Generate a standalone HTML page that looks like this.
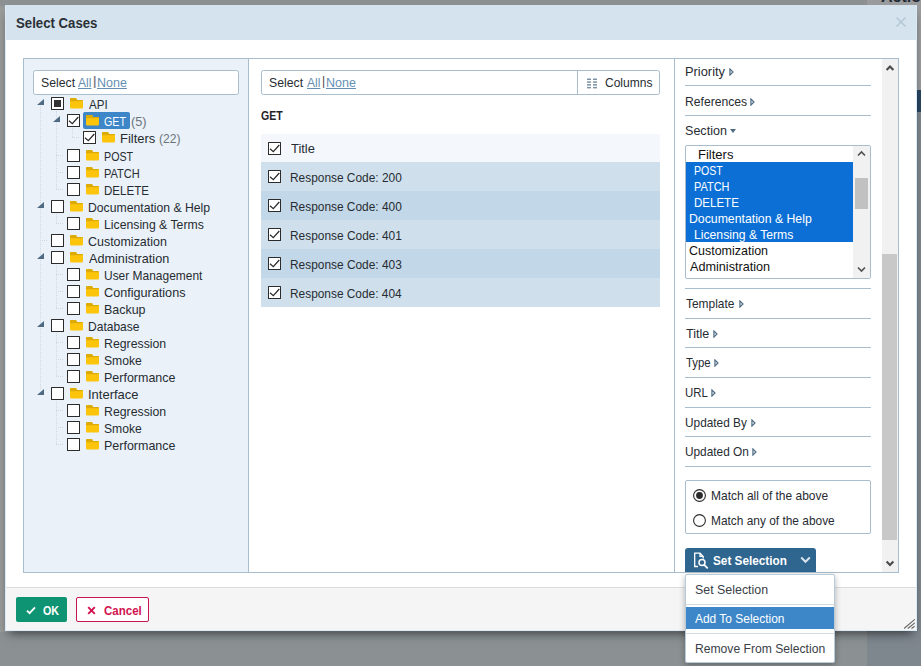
<!DOCTYPE html>
<html><head><meta charset="utf-8"><title>Select Cases</title>
<style>
*{box-sizing:border-box;margin:0;padding:0}
html,body{width:921px;height:666px;overflow:hidden}
body{background:#9a9b9b;font-family:"Liberation Sans",sans-serif;font-size:13.5px;color:#272c32;position:relative}
.abs{position:absolute}
.t{display:inline-block;white-space:nowrap;vertical-align:top;overflow:visible}
.t>span{display:inline-block;transform-origin:0 50%;white-space:nowrap}
a{color:#648fb3}
a .t>span{text-decoration:underline;text-underline-offset:1px}
#dlg{position:absolute;left:5px;top:5px;width:912px;height:626px;background:#fff;box-shadow:0 6px 10px -4px rgba(0,0,0,.62)}
#tb{position:absolute;left:0;top:0;width:912px;height:35px;background:#d4e3ee}
#ft{position:absolute;left:0;top:582px;width:912px;height:44px;background:#f5f5f5;border-top:1px solid #dcdcdc}
.cb{position:absolute;width:13px;height:13px;border:1px solid #2b2b2b;background:#fff;border-radius:.5px}
.cb svg{position:absolute;left:0;top:0}
.row{position:absolute;left:0;height:17px;line-height:17px;white-space:nowrap}
.fold{position:absolute;width:13px;height:11px}
.tri{position:absolute;width:0;height:0;border-left:7px solid transparent;border-bottom:6.5px solid #4e6a82}
.frow{position:absolute;left:685px;width:186px;border-bottom:1px solid #a9bdcc}
.cnt{color:#6b747c}
</style></head><body>

<div class="abs" style="left:0;top:0;width:921px;height:6px;background:#8e9192"></div>
<div class="abs" style="left:0;top:6px;width:6px;height:626px;background:#999a9a"></div>
<div class="abs" style="left:0;top:632px;width:921px;height:34px;background:#8b9193"></div>
<div class="abs" style="left:867px;top:0;width:54px;height:90px;background:#9a9c9d"></div>
<div class="abs" style="left:867px;top:90px;width:54px;height:22px;background:#2a4560"></div>
<div class="abs" style="left:867px;top:112px;width:54px;height:554px;background:#7e868e"></div>
<div class="abs" style="left:881px;top:-11px;font-size:16px;line-height:16px;font-weight:bold;color:#1f2a35;white-space:nowrap">Actions</div>
<div id="dlg"><div id="tb"></div><div id="ft"></div><div class="abs" style="left:0;top:0;width:912px;height:626px;border:1px solid #d9ebf6;border-top:0"></div></div>
<div class="abs" style="left:16px;top:15px;line-height:17px;font-size:14.5px;font-weight:bold;color:#2a3036"><span class="t" style="width:81.42px;margin-left:-0.38px;font-size:14.5px;font-weight:bold;"><span style="transform:scaleX(0.9100)">Select Cases</span></span></div>
<svg class="abs" style="left:895px;top:16px" width="12" height="12" viewBox="0 0 12 12"><path d="M1.5 1.5 L10.5 10.5 M10.5 1.5 L1.5 10.5" stroke="#b4c7d6" stroke-width="1.4" fill="none"/></svg>
<div class="abs" style="left:23px;top:58px;width:876px;height:515px;border:1px solid #a9bdcc;background:#fff"></div>
<div class="abs" style="left:24px;top:59px;width:224px;height:513px;background:#eaf1f8"></div>
<div class="abs" style="left:248px;top:59px;width:1px;height:513px;background:#a9bdcc"></div>
<div class="abs" style="left:674px;top:59px;width:1px;height:513px;background:#a9bdcc"></div>
<div class="abs" style="left:33px;top:70px;width:206px;height:25px;border:1px solid #a9bdcc;border-radius:2.5px;background:#fff"></div>
<div class="abs" style="left:41.2px;top:74px;line-height:17px"><span class="t" style="width:34.05px;margin-left:-0.56px;"><span style="transform:scaleX(0.9074)">Select</span></span></div>
<a class="abs" style="left:78.3px;top:74px;line-height:17px"><span class="t" style="width:13.43px;margin-left:-0.02px;"><span style="transform:scaleX(0.8953)">All</span></span></a>
<div class="abs" style="left:93.0px;top:74.9px;font-size:12px;line-height:12px;color:#7f8388;font-weight:bold;">|</div>
<a class="abs" style="left:98.4px;top:74px;line-height:17px"><span class="t" style="width:29.88px;margin-left:-1.03px;"><span style="transform:scaleX(0.9259)">None</span></span></a>
<div class="abs" style="left:261px;top:70px;width:399px;height:25px;border:1px solid #a9bdcc;border-radius:2.5px;background:#fff"></div>
<div class="abs" style="left:269.6px;top:74px;line-height:17px"><span class="t" style="width:34.05px;margin-left:-0.56px;"><span style="transform:scaleX(0.9074)">Select</span></span></div>
<a class="abs" style="left:306.6px;top:74px;line-height:17px"><span class="t" style="width:13.43px;margin-left:-0.02px;"><span style="transform:scaleX(0.8953)">All</span></span></a>
<div class="abs" style="left:321.9px;top:74.9px;font-size:12px;line-height:12px;color:#4a4448;">|</div>
<a class="abs" style="left:327.5px;top:74px;line-height:17px"><span class="t" style="width:29.88px;margin-left:-1.03px;"><span style="transform:scaleX(0.9259)">None</span></span></a>
<div class="abs" style="left:40px;top:106px;width:0;height:283px;border-left:1px dotted #cfd9e4"></div>
<div class="abs" style="left:56px;top:111px;width:0;height:78px;border-left:1px dotted #cfd9e4"></div>
<div class="abs" style="left:56px;top:155px;width:7px;height:0;border-top:1px dotted #cfd9e4"></div>
<div class="abs" style="left:56px;top:172px;width:7px;height:0;border-top:1px dotted #cfd9e4"></div>
<div class="abs" style="left:56px;top:189px;width:7px;height:0;border-top:1px dotted #cfd9e4"></div>
<div class="abs" style="left:56px;top:214px;width:0;height:9px;border-left:1px dotted #cfd9e4"></div>
<div class="abs" style="left:56px;top:223px;width:7px;height:0;border-top:1px dotted #cfd9e4"></div>
<div class="abs" style="left:40px;top:240px;width:7px;height:0;border-top:1px dotted #cfd9e4"></div>
<div class="abs" style="left:56px;top:265px;width:0;height:43px;border-left:1px dotted #cfd9e4"></div>
<div class="abs" style="left:56px;top:274px;width:7px;height:0;border-top:1px dotted #cfd9e4"></div>
<div class="abs" style="left:56px;top:291px;width:7px;height:0;border-top:1px dotted #cfd9e4"></div>
<div class="abs" style="left:56px;top:308px;width:7px;height:0;border-top:1px dotted #cfd9e4"></div>
<div class="abs" style="left:56px;top:333px;width:0;height:43px;border-left:1px dotted #cfd9e4"></div>
<div class="abs" style="left:56px;top:342px;width:7px;height:0;border-top:1px dotted #cfd9e4"></div>
<div class="abs" style="left:56px;top:359px;width:7px;height:0;border-top:1px dotted #cfd9e4"></div>
<div class="abs" style="left:56px;top:376px;width:7px;height:0;border-top:1px dotted #cfd9e4"></div>
<div class="abs" style="left:56px;top:401px;width:0;height:43px;border-left:1px dotted #cfd9e4"></div>
<div class="abs" style="left:56px;top:410px;width:7px;height:0;border-top:1px dotted #cfd9e4"></div>
<div class="abs" style="left:56px;top:427px;width:7px;height:0;border-top:1px dotted #cfd9e4"></div>
<div class="abs" style="left:56px;top:444px;width:7px;height:0;border-top:1px dotted #cfd9e4"></div>
<div class="abs" style="left:72px;top:128px;width:0;height:9px;border-left:1px dotted #cfd9e4"></div>
<div class="abs" style="left:72px;top:137px;width:7px;height:0;border-top:1px dotted #cfd9e4"></div>
<div class="tri" style="left:37px;top:99px"></div>
<div class="cb" style="left:51px;top:97px"><div style="position:absolute;left:2px;top:2px;width:7px;height:7px;background:#333"></div></div>
<svg class="fold" style="left:69.7px;top:98px;height:10.5px" viewBox="0 0 13 10.5"><path d="M0 1.2 Q0 0 1.2 0 H5.4 Q6.2 0 6.6 .9 L7 2 H11.8 Q13 2 13 3.2 V9.3 Q13 10.5 11.8 10.5 H1.2 Q0 10.5 0 9.3 Z" fill="#fcc50c"/><path d="M0 1.2 Q0 0 1.2 0 H5.4 Q6.2 0 6.6 .9 L7 2 H11.8 Q13 2 13 3.2 H0 Z" fill="#ddab05"/></svg>
<div class="abs" style="left:88.7px;top:96px;line-height:17px;"><span class="t" style="width:18.59px;margin-left:-0.02px;"><span style="transform:scaleX(0.8542)">API</span></span></div>
<div class="tri" style="left:53px;top:116px"></div>
<div class="abs" style="left:83px;top:112px;width:47px;height:17px;background:#3d87c9;border-radius:2px"></div>
<div class="cb" style="left:67px;top:114px"><svg width="11" height="11" viewBox="0 0 11 11"><path d="M1 5.7 L4.3 8.7 L10.3 2" stroke="#2b2b2b" stroke-width="1.25" fill="none"/></svg></div>
<svg class="fold" style="left:85.7px;top:115px;height:10.5px" viewBox="0 0 13 10.5"><path d="M0 1.2 Q0 0 1.2 0 H5.4 Q6.2 0 6.6 .9 L7 2 H11.8 Q13 2 13 3.2 V9.3 Q13 10.5 11.8 10.5 H1.2 Q0 10.5 0 9.3 Z" fill="#fcc50c"/><path d="M0 1.2 Q0 0 1.2 0 H5.4 Q6.2 0 6.6 .9 L7 2 H11.8 Q13 2 13 3.2 H0 Z" fill="#ddab05"/></svg>
<div class="abs" style="left:104.6px;top:113px;line-height:17px;color:#fff;"><span class="t" style="width:21.98px;margin-left:-0.54px;"><span style="transform:scaleX(0.7921)">GET</span></span></div>
<div class="abs cnt" style="left:131.6px;top:113px;line-height:17px"><span class="t" style="width:15.58px;margin-left:-0.79px;"><span style="transform:scaleX(0.9444)">(5)</span></span></div>
<div class="cb" style="left:83px;top:131px"><svg width="11" height="11" viewBox="0 0 11 11"><path d="M1 5.7 L4.3 8.7 L10.3 2" stroke="#2b2b2b" stroke-width="1.25" fill="none"/></svg></div>
<svg class="fold" style="left:101.7px;top:132px;height:10.5px" viewBox="0 0 13 10.5"><path d="M0 1.2 Q0 0 1.2 0 H5.4 Q6.2 0 6.6 .9 L7 2 H11.8 Q13 2 13 3.2 V9.3 Q13 10.5 11.8 10.5 H1.2 Q0 10.5 0 9.3 Z" fill="#fcc50c"/><path d="M0 1.2 Q0 0 1.2 0 H5.4 Q6.2 0 6.6 .9 L7 2 H11.8 Q13 2 13 3.2 H0 Z" fill="#ddab05"/></svg>
<div class="abs" style="left:121.1px;top:130px;line-height:17px;"><span class="t" style="width:35.23px;margin-left:-1.06px;"><span style="transform:scaleX(0.9586)">Filters</span></span></div>
<div class="abs cnt" style="left:159.8px;top:130px;line-height:17px"><span class="t" style="width:21.50px;margin-left:-0.75px;"><span style="transform:scaleX(0.8955)">(22)</span></span></div>
<div class="cb" style="left:67px;top:149px"></div>
<svg class="fold" style="left:85.7px;top:150px;height:10.5px" viewBox="0 0 13 10.5"><path d="M0 1.2 Q0 0 1.2 0 H5.4 Q6.2 0 6.6 .9 L7 2 H11.8 Q13 2 13 3.2 V9.3 Q13 10.5 11.8 10.5 H1.2 Q0 10.5 0 9.3 Z" fill="#fcc50c"/><path d="M0 1.2 Q0 0 1.2 0 H5.4 Q6.2 0 6.6 .9 L7 2 H11.8 Q13 2 13 3.2 H0 Z" fill="#ddab05"/></svg>
<div class="abs" style="left:104.6px;top:148px;line-height:17px;"><span class="t" style="width:29.12px;margin-left:-0.88px;"><span style="transform:scaleX(0.7923)">POST</span></span></div>
<div class="cb" style="left:67px;top:166px"></div>
<svg class="fold" style="left:85.7px;top:167px;height:10.5px" viewBox="0 0 13 10.5"><path d="M0 1.2 Q0 0 1.2 0 H5.4 Q6.2 0 6.6 .9 L7 2 H11.8 Q13 2 13 3.2 V9.3 Q13 10.5 11.8 10.5 H1.2 Q0 10.5 0 9.3 Z" fill="#fcc50c"/><path d="M0 1.2 Q0 0 1.2 0 H5.4 Q6.2 0 6.6 .9 L7 2 H11.8 Q13 2 13 3.2 H0 Z" fill="#ddab05"/></svg>
<div class="abs" style="left:104.6px;top:165px;line-height:17px;"><span class="t" style="width:37.30px;margin-left:-0.90px;"><span style="transform:scaleX(0.8152)">PATCH</span></span></div>
<div class="cb" style="left:67px;top:183px"></div>
<svg class="fold" style="left:85.7px;top:184px;height:10.5px" viewBox="0 0 13 10.5"><path d="M0 1.2 Q0 0 1.2 0 H5.4 Q6.2 0 6.6 .9 L7 2 H11.8 Q13 2 13 3.2 V9.3 Q13 10.5 11.8 10.5 H1.2 Q0 10.5 0 9.3 Z" fill="#fcc50c"/><path d="M0 1.2 Q0 0 1.2 0 H5.4 Q6.2 0 6.6 .9 L7 2 H11.8 Q13 2 13 3.2 H0 Z" fill="#ddab05"/></svg>
<div class="abs" style="left:104.6px;top:182px;line-height:17px;"><span class="t" style="width:44.94px;margin-left:-0.95px;"><span style="transform:scaleX(0.8558)">DELETE</span></span></div>
<div class="tri" style="left:37px;top:202px"></div>
<div class="cb" style="left:51px;top:200px"></div>
<svg class="fold" style="left:69.7px;top:201px;height:10.5px" viewBox="0 0 13 10.5"><path d="M0 1.2 Q0 0 1.2 0 H5.4 Q6.2 0 6.6 .9 L7 2 H11.8 Q13 2 13 3.2 V9.3 Q13 10.5 11.8 10.5 H1.2 Q0 10.5 0 9.3 Z" fill="#fcc50c"/><path d="M0 1.2 Q0 0 1.2 0 H5.4 Q6.2 0 6.6 .9 L7 2 H11.8 Q13 2 13 3.2 H0 Z" fill="#ddab05"/></svg>
<div class="abs" style="left:88.7px;top:199px;line-height:17px;"><span class="t" style="width:122.11px;margin-left:-1.00px;"><span style="transform:scaleX(0.9041)">Documentation &amp; Help</span></span></div>
<div class="cb" style="left:67px;top:217px"></div>
<svg class="fold" style="left:85.7px;top:218px;height:10.5px" viewBox="0 0 13 10.5"><path d="M0 1.2 Q0 0 1.2 0 H5.4 Q6.2 0 6.6 .9 L7 2 H11.8 Q13 2 13 3.2 V9.3 Q13 10.5 11.8 10.5 H1.2 Q0 10.5 0 9.3 Z" fill="#fcc50c"/><path d="M0 1.2 Q0 0 1.2 0 H5.4 Q6.2 0 6.6 .9 L7 2 H11.8 Q13 2 13 3.2 H0 Z" fill="#ddab05"/></svg>
<div class="abs" style="left:104.6px;top:216px;line-height:17px;"><span class="t" style="width:101.35px;margin-left:-1.00px;"><span style="transform:scaleX(0.9066)">Licensing &amp; Terms</span></span></div>
<div class="cb" style="left:51px;top:234px"></div>
<svg class="fold" style="left:69.7px;top:235px;height:10.5px" viewBox="0 0 13 10.5"><path d="M0 1.2 Q0 0 1.2 0 H5.4 Q6.2 0 6.6 .9 L7 2 H11.8 Q13 2 13 3.2 V9.3 Q13 10.5 11.8 10.5 H1.2 Q0 10.5 0 9.3 Z" fill="#fcc50c"/><path d="M0 1.2 Q0 0 1.2 0 H5.4 Q6.2 0 6.6 .9 L7 2 H11.8 Q13 2 13 3.2 H0 Z" fill="#ddab05"/></svg>
<div class="abs" style="left:88.7px;top:233px;line-height:17px;"><span class="t" style="width:78.84px;margin-left:-0.63px;"><span style="transform:scaleX(0.9217)">Customization</span></span></div>
<div class="tri" style="left:37px;top:253px"></div>
<div class="cb" style="left:51px;top:251px"></div>
<svg class="fold" style="left:69.7px;top:252px;height:10.5px" viewBox="0 0 13 10.5"><path d="M0 1.2 Q0 0 1.2 0 H5.4 Q6.2 0 6.6 .9 L7 2 H11.8 Q13 2 13 3.2 V9.3 Q13 10.5 11.8 10.5 H1.2 Q0 10.5 0 9.3 Z" fill="#fcc50c"/><path d="M0 1.2 Q0 0 1.2 0 H5.4 Q6.2 0 6.6 .9 L7 2 H11.8 Q13 2 13 3.2 H0 Z" fill="#ddab05"/></svg>
<div class="abs" style="left:88.7px;top:250px;line-height:17px;"><span class="t" style="width:80.25px;margin-left:-0.02px;"><span style="transform:scaleX(0.9382)">Administration</span></span></div>
<div class="cb" style="left:67px;top:268px"></div>
<svg class="fold" style="left:85.7px;top:269px;height:10.5px" viewBox="0 0 13 10.5"><path d="M0 1.2 Q0 0 1.2 0 H5.4 Q6.2 0 6.6 .9 L7 2 H11.8 Q13 2 13 3.2 V9.3 Q13 10.5 11.8 10.5 H1.2 Q0 10.5 0 9.3 Z" fill="#fcc50c"/><path d="M0 1.2 Q0 0 1.2 0 H5.4 Q6.2 0 6.6 .9 L7 2 H11.8 Q13 2 13 3.2 H0 Z" fill="#ddab05"/></svg>
<div class="abs" style="left:104.6px;top:267px;line-height:17px;"><span class="t" style="width:98.41px;margin-left:-0.92px;"><span style="transform:scaleX(0.8862)">User Management</span></span></div>
<div class="cb" style="left:67px;top:285px"></div>
<svg class="fold" style="left:85.7px;top:286px;height:10.5px" viewBox="0 0 13 10.5"><path d="M0 1.2 Q0 0 1.2 0 H5.4 Q6.2 0 6.6 .9 L7 2 H11.8 Q13 2 13 3.2 V9.3 Q13 10.5 11.8 10.5 H1.2 Q0 10.5 0 9.3 Z" fill="#fcc50c"/><path d="M0 1.2 Q0 0 1.2 0 H5.4 Q6.2 0 6.6 .9 L7 2 H11.8 Q13 2 13 3.2 H0 Z" fill="#ddab05"/></svg>
<div class="abs" style="left:104.6px;top:284px;line-height:17px;"><span class="t" style="width:81.50px;margin-left:-0.64px;"><span style="transform:scaleX(0.9362)">Configurations</span></span></div>
<div class="cb" style="left:67px;top:302px"></div>
<svg class="fold" style="left:85.7px;top:303px;height:10.5px" viewBox="0 0 13 10.5"><path d="M0 1.2 Q0 0 1.2 0 H5.4 Q6.2 0 6.6 .9 L7 2 H11.8 Q13 2 13 3.2 V9.3 Q13 10.5 11.8 10.5 H1.2 Q0 10.5 0 9.3 Z" fill="#fcc50c"/><path d="M0 1.2 Q0 0 1.2 0 H5.4 Q6.2 0 6.6 .9 L7 2 H11.8 Q13 2 13 3.2 H0 Z" fill="#ddab05"/></svg>
<div class="abs" style="left:104.6px;top:301px;line-height:17px;"><span class="t" style="width:41.54px;margin-left:-1.02px;"><span style="transform:scaleX(0.9226)">Backup</span></span></div>
<div class="tri" style="left:37px;top:321px"></div>
<div class="cb" style="left:51px;top:319px"></div>
<svg class="fold" style="left:69.7px;top:320px;height:10.5px" viewBox="0 0 13 10.5"><path d="M0 1.2 Q0 0 1.2 0 H5.4 Q6.2 0 6.6 .9 L7 2 H11.8 Q13 2 13 3.2 V9.3 Q13 10.5 11.8 10.5 H1.2 Q0 10.5 0 9.3 Z" fill="#fcc50c"/><path d="M0 1.2 Q0 0 1.2 0 H5.4 Q6.2 0 6.6 .9 L7 2 H11.8 Q13 2 13 3.2 H0 Z" fill="#ddab05"/></svg>
<div class="abs" style="left:88.7px;top:318px;line-height:17px;"><span class="t" style="width:51.52px;margin-left:-0.99px;"><span style="transform:scaleX(0.8915)">Database</span></span></div>
<div class="cb" style="left:67px;top:336px"></div>
<svg class="fold" style="left:85.7px;top:337px;height:10.5px" viewBox="0 0 13 10.5"><path d="M0 1.2 Q0 0 1.2 0 H5.4 Q6.2 0 6.6 .9 L7 2 H11.8 Q13 2 13 3.2 V9.3 Q13 10.5 11.8 10.5 H1.2 Q0 10.5 0 9.3 Z" fill="#fcc50c"/><path d="M0 1.2 Q0 0 1.2 0 H5.4 Q6.2 0 6.6 .9 L7 2 H11.8 Q13 2 13 3.2 H0 Z" fill="#ddab05"/></svg>
<div class="abs" style="left:104.6px;top:335px;line-height:17px;"><span class="t" style="width:62.21px;margin-left:-1.01px;"><span style="transform:scaleX(0.9110)">Regression</span></span></div>
<div class="cb" style="left:67px;top:353px"></div>
<svg class="fold" style="left:85.7px;top:354px;height:10.5px" viewBox="0 0 13 10.5"><path d="M0 1.2 Q0 0 1.2 0 H5.4 Q6.2 0 6.6 .9 L7 2 H11.8 Q13 2 13 3.2 V9.3 Q13 10.5 11.8 10.5 H1.2 Q0 10.5 0 9.3 Z" fill="#fcc50c"/><path d="M0 1.2 Q0 0 1.2 0 H5.4 Q6.2 0 6.6 .9 L7 2 H11.8 Q13 2 13 3.2 H0 Z" fill="#ddab05"/></svg>
<div class="abs" style="left:104.6px;top:352px;line-height:17px;"><span class="t" style="width:37.79px;margin-left:-0.55px;"><span style="transform:scaleX(0.8994)">Smoke</span></span></div>
<div class="cb" style="left:67px;top:370px"></div>
<svg class="fold" style="left:85.7px;top:371px;height:10.5px" viewBox="0 0 13 10.5"><path d="M0 1.2 Q0 0 1.2 0 H5.4 Q6.2 0 6.6 .9 L7 2 H11.8 Q13 2 13 3.2 V9.3 Q13 10.5 11.8 10.5 H1.2 Q0 10.5 0 9.3 Z" fill="#fcc50c"/><path d="M0 1.2 Q0 0 1.2 0 H5.4 Q6.2 0 6.6 .9 L7 2 H11.8 Q13 2 13 3.2 H0 Z" fill="#ddab05"/></svg>
<div class="abs" style="left:104.6px;top:369px;line-height:17px;"><span class="t" style="width:71.48px;margin-left:-1.02px;"><span style="transform:scaleX(0.9249)">Performance</span></span></div>
<div class="tri" style="left:37px;top:389px"></div>
<div class="cb" style="left:51px;top:387px"></div>
<svg class="fold" style="left:69.7px;top:388px;height:10.5px" viewBox="0 0 13 10.5"><path d="M0 1.2 Q0 0 1.2 0 H5.4 Q6.2 0 6.6 .9 L7 2 H11.8 Q13 2 13 3.2 V9.3 Q13 10.5 11.8 10.5 H1.2 Q0 10.5 0 9.3 Z" fill="#fcc50c"/><path d="M0 1.2 Q0 0 1.2 0 H5.4 Q6.2 0 6.6 .9 L7 2 H11.8 Q13 2 13 3.2 H0 Z" fill="#ddab05"/></svg>
<div class="abs" style="left:88.7px;top:386px;line-height:17px;"><span class="t" style="width:50.47px;margin-left:-1.20px;"><span style="transform:scaleX(0.9608)">Interface</span></span></div>
<div class="cb" style="left:67px;top:404px"></div>
<svg class="fold" style="left:85.7px;top:405px;height:10.5px" viewBox="0 0 13 10.5"><path d="M0 1.2 Q0 0 1.2 0 H5.4 Q6.2 0 6.6 .9 L7 2 H11.8 Q13 2 13 3.2 V9.3 Q13 10.5 11.8 10.5 H1.2 Q0 10.5 0 9.3 Z" fill="#fcc50c"/><path d="M0 1.2 Q0 0 1.2 0 H5.4 Q6.2 0 6.6 .9 L7 2 H11.8 Q13 2 13 3.2 H0 Z" fill="#ddab05"/></svg>
<div class="abs" style="left:104.6px;top:403px;line-height:17px;"><span class="t" style="width:62.21px;margin-left:-1.01px;"><span style="transform:scaleX(0.9110)">Regression</span></span></div>
<div class="cb" style="left:67px;top:421px"></div>
<svg class="fold" style="left:85.7px;top:422px;height:10.5px" viewBox="0 0 13 10.5"><path d="M0 1.2 Q0 0 1.2 0 H5.4 Q6.2 0 6.6 .9 L7 2 H11.8 Q13 2 13 3.2 V9.3 Q13 10.5 11.8 10.5 H1.2 Q0 10.5 0 9.3 Z" fill="#fcc50c"/><path d="M0 1.2 Q0 0 1.2 0 H5.4 Q6.2 0 6.6 .9 L7 2 H11.8 Q13 2 13 3.2 H0 Z" fill="#ddab05"/></svg>
<div class="abs" style="left:104.6px;top:420px;line-height:17px;"><span class="t" style="width:37.79px;margin-left:-0.55px;"><span style="transform:scaleX(0.8994)">Smoke</span></span></div>
<div class="cb" style="left:67px;top:438px"></div>
<svg class="fold" style="left:85.7px;top:439px;height:10.5px" viewBox="0 0 13 10.5"><path d="M0 1.2 Q0 0 1.2 0 H5.4 Q6.2 0 6.6 .9 L7 2 H11.8 Q13 2 13 3.2 V9.3 Q13 10.5 11.8 10.5 H1.2 Q0 10.5 0 9.3 Z" fill="#fcc50c"/><path d="M0 1.2 Q0 0 1.2 0 H5.4 Q6.2 0 6.6 .9 L7 2 H11.8 Q13 2 13 3.2 H0 Z" fill="#ddab05"/></svg>
<div class="abs" style="left:104.6px;top:437px;line-height:17px;"><span class="t" style="width:71.48px;margin-left:-1.02px;"><span style="transform:scaleX(0.9249)">Performance</span></span></div>
<div class="abs" style="left:261.8px;top:108px;line-height:17px;font-size:12px;font-weight:bold;color:#1f2328"><span class="t" style="width:21.64px;margin-left:-0.43px;font-size:12px;font-weight:bold;"><span style="transform:scaleX(0.8775)">GET</span></span></div>
<div class="abs" style="left:261px;top:134px;width:399px;height:28px;background:#f4f8fc"></div>
<div class="cb" style="left:268px;top:142px"><svg width="11" height="11" viewBox="0 0 11 11"><path d="M1 5.7 L4.3 8.7 L10.3 2" stroke="#2b2b2b" stroke-width="1.25" fill="none"/></svg></div>
<div class="abs" style="left:291.2px;top:140px;line-height:17px"><span class="t" style="width:24.36px;margin-left:-0.29px;"><span style="transform:scaleX(0.9553)">Title</span></span></div>
<div class="abs" style="left:261px;top:162px;width:399px;height:29px;background:#cfe0ec"></div>
<div class="cb" style="left:268px;top:170px"><svg width="11" height="11" viewBox="0 0 11 11"><path d="M1 5.7 L4.3 8.7 L10.3 2" stroke="#2b2b2b" stroke-width="1.25" fill="none"/></svg></div>
<div class="abs" style="left:291.2px;top:169px;line-height:17px"><span class="t" style="width:111.74px;margin-left:-0.98px;"><span style="transform:scaleX(0.8810)">Response Code: 200</span></span></div>
<div class="abs" style="left:261px;top:191px;width:399px;height:29px;background:#c2d7e7"></div>
<div class="cb" style="left:268px;top:199px"><svg width="11" height="11" viewBox="0 0 11 11"><path d="M1 5.7 L4.3 8.7 L10.3 2" stroke="#2b2b2b" stroke-width="1.25" fill="none"/></svg></div>
<div class="abs" style="left:291.2px;top:198px;line-height:17px"><span class="t" style="width:111.74px;margin-left:-0.98px;"><span style="transform:scaleX(0.8810)">Response Code: 400</span></span></div>
<div class="abs" style="left:261px;top:220px;width:399px;height:29px;background:#cfe0ec"></div>
<div class="cb" style="left:268px;top:228px"><svg width="11" height="11" viewBox="0 0 11 11"><path d="M1 5.7 L4.3 8.7 L10.3 2" stroke="#2b2b2b" stroke-width="1.25" fill="none"/></svg></div>
<div class="abs" style="left:291.2px;top:227px;line-height:17px"><span class="t" style="width:111.86px;margin-left:-0.98px;"><span style="transform:scaleX(0.8819)">Response Code: 401</span></span></div>
<div class="abs" style="left:261px;top:249px;width:399px;height:29px;background:#c2d7e7"></div>
<div class="cb" style="left:268px;top:257px"><svg width="11" height="11" viewBox="0 0 11 11"><path d="M1 5.7 L4.3 8.7 L10.3 2" stroke="#2b2b2b" stroke-width="1.25" fill="none"/></svg></div>
<div class="abs" style="left:291.2px;top:256px;line-height:17px"><span class="t" style="width:111.80px;margin-left:-0.98px;"><span style="transform:scaleX(0.8814)">Response Code: 403</span></span></div>
<div class="abs" style="left:261px;top:278px;width:399px;height:29px;background:#cfe0ec"></div>
<div class="cb" style="left:268px;top:286px"><svg width="11" height="11" viewBox="0 0 11 11"><path d="M1 5.7 L4.3 8.7 L10.3 2" stroke="#2b2b2b" stroke-width="1.25" fill="none"/></svg></div>
<div class="abs" style="left:291.2px;top:285px;line-height:17px"><span class="t" style="width:111.62px;margin-left:-0.97px;"><span style="transform:scaleX(0.8800)">Response Code: 404</span></span></div>
<div class="abs" style="left:577px;top:71px;width:1px;height:23px;background:#a9bdcc"></div>
<svg class="abs" style="left:586.7px;top:77.5px" width="11" height="11" viewBox="0 0 11 11"><g fill="#7f93a5"><rect x="0" y="0.5" width="4" height="1.5"/><rect x="0" y="3.3" width="4" height="1.5"/><rect x="0" y="6.1" width="4" height="1.5"/><rect x="0" y="8.9" width="4" height="1.5"/><rect x="6" y="0.5" width="4" height="1.5"/><rect x="6" y="3.3" width="4" height="1.5"/><rect x="6" y="6.1" width="4" height="1.5"/><rect x="6" y="8.9" width="4" height="1.5"/></g></svg>
<div class="abs" style="left:605.2px;top:74px;line-height:17px"><span class="t" style="width:47.45px;margin-left:-0.61px;"><span style="transform:scaleX(0.8907)">Columns</span></span></div>
<div class="abs" style="left:685px;top:85px;width:186px;height:1px;background:#a9bdcc"></div>
<div class="abs" style="left:685px;top:115px;width:186px;height:1px;background:#a9bdcc"></div>
<div class="abs" style="left:685px;top:288px;width:186px;height:1px;background:#a9bdcc"></div>
<div class="abs" style="left:685px;top:318px;width:186px;height:1px;background:#a9bdcc"></div>
<div class="abs" style="left:685px;top:347px;width:186px;height:1px;background:#a9bdcc"></div>
<div class="abs" style="left:685px;top:377px;width:186px;height:1px;background:#a9bdcc"></div>
<div class="abs" style="left:685px;top:407px;width:186px;height:1px;background:#a9bdcc"></div>
<div class="abs" style="left:685px;top:436px;width:186px;height:1px;background:#a9bdcc"></div>
<div class="abs" style="left:685px;top:466px;width:186px;height:1px;background:#a9bdcc"></div>
<div class="abs" style="left:685.8px;top:63px;line-height:17px;font-size:13px"><span class="t" style="width:39.98px;margin-left:-1.05px;font-size:13px;"><span style="transform:scaleX(0.9884)">Priority</span></span></div>
<svg class="abs" style="left:728.4999999999999px;top:68.4px" width="5" height="8" viewBox="0 0 5 8"><path d="M0.9 0.9 L4 4 L0.9 7.1 Z" fill="#e4ebf1" stroke="#4e6a82" stroke-width="1.15"/></svg>
<div class="abs" style="left:685.8px;top:93px;line-height:17px;font-size:13px"><span class="t" style="width:62.14px;margin-left:-1.00px;font-size:13px;"><span style="transform:scaleX(0.9347)">References</span></span></div>
<svg class="abs" style="left:750.3px;top:98.4px" width="5" height="8" viewBox="0 0 5 8"><path d="M0.9 0.9 L4 4 L0.9 7.1 Z" fill="#e4ebf1" stroke="#4e6a82" stroke-width="1.15"/></svg>
<div class="abs" style="left:685.8px;top:122px;line-height:17px;font-size:13px"><span class="t" style="width:41.89px;margin-left:-0.57px;font-size:13px;"><span style="transform:scaleX(0.9660)">Section</span></span></div>
<div class="abs" style="left:730.1999999999999px;top:128.8px;width:0;height:0;border-left:3.2px solid transparent;border-right:3.2px solid transparent;border-top:4px solid #4e6a82"></div>
<div class="abs" style="left:686.2px;top:295px;line-height:17px;font-size:13px"><span class="t" style="width:49.80px;margin-left:-0.27px;font-size:13px;"><span style="transform:scaleX(0.9190)">Template</span></span></div>
<svg class="abs" style="left:739.0px;top:300.4px" width="5" height="8" viewBox="0 0 5 8"><path d="M0.9 0.9 L4 4 L0.9 7.1 Z" fill="#e4ebf1" stroke="#4e6a82" stroke-width="1.15"/></svg>
<div class="abs" style="left:686.2px;top:325px;line-height:17px;font-size:13px"><span class="t" style="width:23.74px;margin-left:-0.28px;font-size:13px;"><span style="transform:scaleX(0.9667)">Title</span></span></div>
<svg class="abs" style="left:712.9px;top:330.4px" width="5" height="8" viewBox="0 0 5 8"><path d="M0.9 0.9 L4 4 L0.9 7.1 Z" fill="#e4ebf1" stroke="#4e6a82" stroke-width="1.15"/></svg>
<div class="abs" style="left:686.2px;top:354px;line-height:17px;font-size:13px"><span class="t" style="width:25.16px;margin-left:-0.25px;font-size:13px;"><span style="transform:scaleX(0.8705)">Type</span></span></div>
<svg class="abs" style="left:714.4px;top:359.4px" width="5" height="8" viewBox="0 0 5 8"><path d="M0.9 0.9 L4 4 L0.9 7.1 Z" fill="#e4ebf1" stroke="#4e6a82" stroke-width="1.15"/></svg>
<div class="abs" style="left:685.8px;top:384px;line-height:17px;font-size:13px"><span class="t" style="width:22.86px;margin-left:-0.88px;font-size:13px;"><span style="transform:scaleX(0.8791)">URL</span></span></div>
<svg class="abs" style="left:711.1999999999999px;top:389.4px" width="5" height="8" viewBox="0 0 5 8"><path d="M0.9 0.9 L4 4 L0.9 7.1 Z" fill="#e4ebf1" stroke="#4e6a82" stroke-width="1.15"/></svg>
<div class="abs" style="left:685.8px;top:414px;line-height:17px;font-size:13px"><span class="t" style="width:61.84px;margin-left:-0.91px;font-size:13px;"><span style="transform:scaleX(0.9103)">Updated By</span></span></div>
<svg class="abs" style="left:750.4999999999999px;top:419.4px" width="5" height="8" viewBox="0 0 5 8"><path d="M0.9 0.9 L4 4 L0.9 7.1 Z" fill="#e4ebf1" stroke="#4e6a82" stroke-width="1.15"/></svg>
<div class="abs" style="left:685.8px;top:443px;line-height:17px;font-size:13px"><span class="t" style="width:63.78px;margin-left:-0.91px;font-size:13px;"><span style="transform:scaleX(0.9098)">Updated On</span></span></div>
<svg class="abs" style="left:751.6999999999999px;top:448.4px" width="5" height="8" viewBox="0 0 5 8"><path d="M0.9 0.9 L4 4 L0.9 7.1 Z" fill="#e4ebf1" stroke="#4e6a82" stroke-width="1.15"/></svg>
<div class="abs" style="left:685px;top:145px;width:186px;height:134px;border:1px solid #a9bdcc;background:#fff;overflow:hidden;border-radius:2px"></div>
<div class="abs" style="left:686px;top:146px;width:184px;height:132px;overflow:hidden">
<div class="abs" style="left:0;top:0px;width:167px;height:16px;color:#111;"></div>
<div class="abs" style="left:13.5px;top:0px;line-height:17px;font-size:13px;color:#111;"><span class="t" style="width:35.44px;margin-left:-1.07px;font-size:13px;"><span style="transform:scaleX(1.0014)">Filters</span></span></div>
<div class="abs" style="left:0;top:16px;width:167px;height:16px;background:#0b6fd6;color:#fff;"></div>
<div class="abs" style="left:8.600000000000023px;top:16px;line-height:17px;font-size:13px;color:#fff;"><span class="t" style="width:28.81px;margin-left:-0.87px;font-size:13px;"><span style="transform:scaleX(0.8140)">POST</span></span></div>
<div class="abs" style="left:0;top:32px;width:167px;height:16px;background:#0b6fd6;color:#fff;"></div>
<div class="abs" style="left:8.600000000000023px;top:32px;line-height:17px;font-size:13px;color:#fff;"><span class="t" style="width:37.09px;margin-left:-0.90px;font-size:13px;"><span style="transform:scaleX(0.8418)">PATCH</span></span></div>
<div class="abs" style="left:0;top:48px;width:167px;height:16px;background:#0b6fd6;color:#fff;"></div>
<div class="abs" style="left:8.600000000000023px;top:48px;line-height:17px;font-size:13px;color:#fff;"><span class="t" style="width:44.84px;margin-left:-0.95px;font-size:13px;"><span style="transform:scaleX(0.8867)">DELETE</span></span></div>
<div class="abs" style="left:0;top:64px;width:167px;height:16px;background:#0b6fd6;color:#fff;"></div>
<div class="abs" style="left:3.7000000000000455px;top:64px;line-height:17px;font-size:13px;color:#fff;"><span class="t" style="width:122.72px;margin-left:-1.01px;font-size:13px;"><span style="transform:scaleX(0.9435)">Documentation &amp; Help</span></span></div>
<div class="abs" style="left:0;top:80px;width:167px;height:16px;background:#0b6fd6;color:#fff;"></div>
<div class="abs" style="left:8.600000000000023px;top:80px;line-height:17px;font-size:13px;color:#fff;"><span class="t" style="width:100.94px;margin-left:-1.00px;font-size:13px;"><span style="transform:scaleX(0.9377)">Licensing &amp; Terms</span></span></div>
<div class="abs" style="left:0;top:96px;width:167px;height:16px;color:#111;"></div>
<div class="abs" style="left:3.7000000000000455px;top:96px;line-height:17px;font-size:13px;color:#111;"><span class="t" style="width:79.04px;margin-left:-0.63px;font-size:13px;"><span style="transform:scaleX(0.9597)">Customization</span></span></div>
<div class="abs" style="left:0;top:112px;width:167px;height:16px;color:#111;"></div>
<div class="abs" style="left:3.7000000000000455px;top:112px;line-height:17px;font-size:13px;color:#111;"><span class="t" style="width:80.15px;margin-left:-0.02px;font-size:13px;"><span style="transform:scaleX(0.9730)">Administration</span></span></div>
<div class="abs" style="left:0;top:128px;width:167px;height:16px;color:#111;"></div>
<div class="abs" style="left:8.600000000000023px;top:128px;line-height:17px;font-size:13px;color:#111;"><span class="t" style="width:98.21px;margin-left:-0.92px;font-size:13px;"><span style="transform:scaleX(0.9184)">User Management</span></span></div>
<div class="abs" style="left:167px;top:0;width:17px;height:132px;background:#f1f1f1"></div>
<div class="abs" style="left:169px;top:32px;width:13px;height:31px;background:#c1c1c1"></div>
<svg class="abs" style="left:171px;top:4px" width="9" height="7" viewBox="0 0 9 7"><path d="M1 5.5 L4.5 2 L8 5.5" stroke="#505050" stroke-width="1.6" fill="none"/></svg>
<svg class="abs" style="left:171px;top:120px" width="9" height="7" viewBox="0 0 9 7"><path d="M1 1.5 L4.5 5 L8 1.5" stroke="#505050" stroke-width="1.6" fill="none"/></svg>
</div>
<div class="abs" style="left:685px;top:480px;width:186px;height:54px;border:1px solid #a9bdcc;border-radius:2px;background:#fff"></div>
<svg class="abs" style="left:693.0px;top:489.0px" width="13" height="13" viewBox="0 0 13 13"><circle cx="6.5" cy="6.5" r="5.9" fill="#fff" stroke="#2b2b2b" stroke-width="1.1"/><circle cx="6.5" cy="6.5" r="3.4" fill="#2b2b2b"/></svg>
<svg class="abs" style="left:693.0px;top:514.0px" width="13" height="13" viewBox="0 0 13 13"><circle cx="6.5" cy="6.5" r="5.9" fill="#fff" stroke="#2b2b2b" stroke-width="1.1"/></svg>
<div class="abs" style="left:711.9px;top:487px;line-height:17px;font-size:13px"><span class="t" style="width:117.11px;margin-left:-0.98px;font-size:13px;"><span style="transform:scaleX(0.9208)">Match all of the above</span></span></div>
<div class="abs" style="left:711.9px;top:512px;line-height:17px;font-size:13px"><span class="t" style="width:123.70px;margin-left:-0.98px;font-size:13px;"><span style="transform:scaleX(0.9154)">Match any of the above</span></span></div>
<div class="abs" style="left:882px;top:59px;width:16px;height:513px;background:#f1f1f1"></div>
<div class="abs" style="left:882px;top:254px;width:15px;height:286px;background:#c8c8c8"></div>
<svg class="abs" style="left:885px;top:64px" width="10" height="8" viewBox="0 0 10 8"><path d="M1.6 6 L5 2.5 L8.4 6" stroke="#4a4a4a" stroke-width="2.1" fill="none"/></svg>
<svg class="abs" style="left:885px;top:560px" width="10" height="8" viewBox="0 0 10 8"><path d="M1.6 1.6 L5 5.1 L8.4 1.6" stroke="#4a4a4a" stroke-width="2.1" fill="none"/></svg>
<div class="abs" style="left:685px;top:548px;width:131px;height:24px;background:#2f6690;border-radius:3px 3px 0 0"></div>
<svg class="abs" style="left:693px;top:552px" width="16" height="17" viewBox="0 0 16 17"><path d="M5 14.5 H1.7 V1.2 H7 L10.2 4.4 V6.5 M7 1.2 V4.4 H10.2" stroke="#fff" stroke-width="1.3" fill="none"/><circle cx="9" cy="10.5" r="3" stroke="#fff" stroke-width="1.5" fill="none"/><path d="M11.2 12.8 L14.2 15.8" stroke="#fff" stroke-width="1.8" stroke-linecap="round"/></svg>
<div class="abs" style="left:713.4px;top:553px;line-height:17px;font-size:12px;font-weight:bold;color:#fff"><span class="t" style="width:73.87px;margin-left:-0.34px;font-size:12px;font-weight:bold;"><span style="transform:scaleX(0.9802)">Set Selection</span></span></div>
<svg class="abs" style="left:800px;top:556px" width="11" height="8" viewBox="0 0 11 8"><path d="M1.2 1.5 L5.5 5.8 L9.8 1.5" stroke="#d9e3ec" stroke-width="2" fill="none"/></svg>
<div class="abs" style="left:16px;top:597px;width:51px;height:25px;background:#0f9473;border-radius:2px"></div>
<svg class="abs" style="left:26px;top:606px" width="10" height="9" viewBox="0 0 10 9"><path d="M1 4.6 L3.6 7.2 L9 1.4" stroke="#fff" stroke-width="1.8" fill="none"/></svg>
<div class="abs" style="left:43.6px;top:602.5px;line-height:17px;font-weight:bold;color:#fff;font-size:12px"><span class="t" style="width:16.04px;margin-left:-0.44px;font-size:12px;font-weight:bold;"><span style="transform:scaleX(0.8910)">OK</span></span></div>
<div class="abs" style="left:76px;top:597px;width:73px;height:25px;background:#fff;border:1px solid #c5164f;border-radius:2px"></div>
<svg class="abs" style="left:87px;top:606px" width="9" height="9" viewBox="0 0 9 9"><path d="M1.2 1.2 L7.8 7.8 M7.8 1.2 L1.2 7.8" stroke="#d2124f" stroke-width="1.9" fill="none"/></svg>
<div class="abs" style="left:104.4px;top:602.5px;line-height:17px;font-weight:bold;color:#d2124f;font-size:12px"><span class="t" style="width:37.79px;margin-left:-0.47px;font-size:12px;font-weight:bold;"><span style="transform:scaleX(0.9603)">Cancel</span></span></div>
<svg class="abs" style="left:904px;top:618px" width="12" height="12" viewBox="0 0 12 12"><path d="M0 10.5 L10.8 1.3 M3.8 10.5 L10.8 4.9 M7.5 10.5 L10.6 8.2" stroke="#666" stroke-width="1.1" fill="none"/></svg>
<div class="abs" style="left:685px;top:574px;width:150px;height:89px;background:#fff;border:1px solid #b9cad8;border-radius:2px;box-shadow:0 2px 6px rgba(0,0,0,.3)"></div>
<div class="abs" style="left:686px;top:604px;width:148px;height:1px;background:#cfdbe5"></div>
<div class="abs" style="left:686px;top:633px;width:148px;height:1px;background:#cfdbe5"></div>
<div class="abs" style="left:686px;top:607px;width:148px;height:22px;background:#3d87c9"></div>
<div class="abs" style="left:695.5px;top:581px;line-height:17px;color:#3a4047"><span class="t" style="width:73.07px;margin-left:-0.56px;font-size:13px;"><span style="transform:scaleX(0.9539)">Set Selection</span></span></div>
<div class="abs" style="left:695.5px;top:610px;line-height:17px;color:#fff"><span class="t" style="width:91.00px;margin-left:-0.02px;font-size:13px;"><span style="transform:scaleX(0.9191)">Add To Selection</span></span></div>
<div class="abs" style="left:695.5px;top:639.5px;line-height:17px;color:#3a4047"><span class="t" style="width:130.18px;margin-left:-1.00px;font-size:13px;"><span style="transform:scaleX(0.9336)">Remove From Selection</span></span></div>
</body></html>
